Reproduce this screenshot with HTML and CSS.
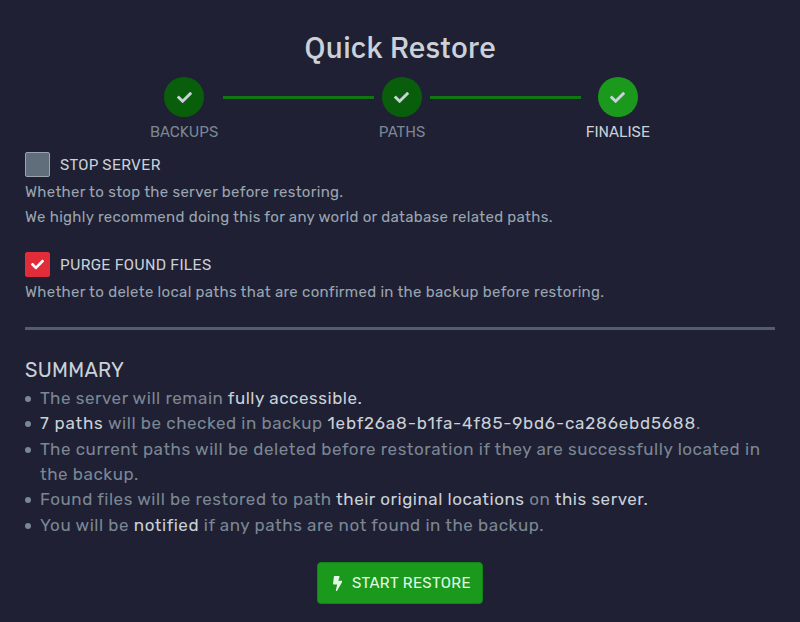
FILE: index.html
```html
<!DOCTYPE html>
<html lang="en">
<head>
<meta charset="utf-8">
<title>Quick Restore</title>
<link rel="stylesheet" href="styles.css">
</head>
<body>
<main class="wizard">
  <h1>Quick Restore</h1>
  <ol class="steps">
    <li class="step"><span class="dot"><svg viewBox="0 0 512 512"><path d="M173.9 439.4 7.5 273c-10-10-10-26.200 0-36.200l36.200-36.200c10-10 26.200-10 36.200 0L192 312.700 432.100 72.600c10-10 26.200-10 36.200 0l36.200 36.200c10 10 10 26.200 0 36.200L210.100 439.400c-10 10-26.200 10-36.200 0z"/></svg></span><span class="label">BACKUPS</span></li>
    <li class="line"></li>
    <li class="step"><span class="dot"><svg viewBox="0 0 512 512"><path d="M173.9 439.4 7.5 273c-10-10-10-26.200 0-36.200l36.200-36.200c10-10 26.200-10 36.200 0L192 312.700 432.100 72.600c10-10 26.200-10 36.200 0l36.200 36.200c10 10 10 26.200 0 36.200L210.100 439.400c-10 10-26.200 10-36.200 0z"/></svg></span><span class="label">PATHS</span></li>
    <li class="line"></li>
    <li class="step active"><span class="dot"><svg viewBox="0 0 512 512"><path d="M173.9 439.4 7.5 273c-10-10-10-26.200 0-36.200l36.200-36.200c10-10 26.200-10 36.200 0L192 312.700 432.100 72.600c10-10 26.200-10 36.200 0l36.200 36.200c10 10 10 26.200 0 36.200L210.100 439.400c-10 10-26.200 10-36.200 0z"/></svg></span><span class="label">FINALISE</span></li>
  </ol>
  <section class="option">
    <div class="option-head"><span class="box"></span><span class="name">STOP SERVER</span></div>
    <p>Whether to stop the server before restoring.</p>
    <p>We highly recommend doing this for any world or database related paths.</p>
  </section>
  <section class="option">
    <div class="option-head"><span class="box checked"><svg viewBox="0 0 512 512"><path d="M173.9 439.4 7.5 273c-10-10-10-26.200 0-36.200l36.200-36.200c10-10 26.200-10 36.200 0L192 312.700 432.100 72.600c10-10 26.200-10 36.200 0l36.200 36.200c10 10 10 26.200 0 36.200L210.100 439.400c-10 10-26.200 10-36.200 0z"/></svg></span><span class="name">PURGE FOUND FILES</span></div>
    <p>Whether to delete local paths that are confirmed in the backup before restoring.</p>
  </section>
  <hr>
  <h2>SUMMARY</h2>
  <ul class="summary">
    <li>The server will remain <b>fully accessible.</b></li>
    <li><b class="wide">7 paths</b> will be checked in backup <b class="wide">1ebf26a8-b1fa-4f85-9bd6-ca286ebd5688</b>.</li>
    <li>The current paths will be deleted before restoration if they are successfully located in the backup.</li>
    <li>Found files will be restored to path <b>their original locations</b> on <b>this server.</b></li>
    <li>You will be <b>notified</b> if any paths are not found in the backup.</li>
  </ul>
  <button class="start"><svg viewBox="0 0 320 512"><path d="M296 160H180.600l42.600-129.800C227.200 15 215.700 0 200 0H56C44 0 33.800 8.900 32.200 20.800l-32 240C-1.700 275.200 9.500 288 24 288h118.700L96.600 482.500c-3.600 15.200 8 29.500 23.300 29.500 8.400 0 16.400-4.400 20.800-12l176-304c9.300-15.900-2.200-36-20.700-36z"/></svg><span>START RESTORE</span></button>
</main>
</body>
</html>
```
FILE: styles.css
```css
* { box-sizing: border-box; margin: 0; padding: 0; }
body { background: #1f2033; color: #cad1d8; font-family: Rubik, Inter, sans-serif; }
.wizard { height: 622px; padding: 27px 25px 0; display: flex; flex-direction: column; }
h1 { font: 500 30px/40px "IBM Plex Sans", "Open Sans", sans-serif; text-align: center; }
.steps { list-style: none; display: flex; align-self: center; gap: 5px; width: 500px; margin-top: 10px; height: 75px; }
.step { display: flex; flex-direction: column; align-items: center; }
.dot { width: 40px; height: 40px; border-radius: 50%; background: #085e0b; display: grid; place-items: center; }
.dot svg { width: 15px; fill: #cad1d8; }
.label { font-size: 15px; line-height: 20px; margin-top: 5px; color: #7b8793; }
.active .dot { background: #1a991d; }
.active .label { color: #cad1d8; }
.line { flex: 1; height: 3px; margin-top: 19px; background: #0f7613; }
.option { height: 100px; }
.option-head { display: flex; align-items: center; gap: 10px; height: 25px; margin-bottom: 3px; font-size: 15px; letter-spacing: 0.3px; }
.box { width: 25px; height: 25px; background: #606d7b; border: 1px solid #9aa5b1; border-radius: 2px; display: grid; place-items: center; }
.box.checked { background: #e12d39; border-color: #e12d39; }
.box svg { width: 13px; fill: #fff; }
.option p { font-size: 15px; line-height: 25px; letter-spacing: 0.31px; color: #9aa5b1; }
hr { border: 0; height: 3px; background: #515f6c; margin-top: -25px; }
h2 { font-size: 20px; font-weight: 400; line-height: 28px; letter-spacing: 0.3px; margin-top: 26px; }
.summary { padding-left: 15px; margin-top: 2.1px; list-style: none; font-size: 17px; line-height: 25.3px; letter-spacing: 0.54px; color: #7b8793; }
.summary li::before { content: ""; float: left; width: 6px; height: 6px; margin: 10px 0 0 -15px; border-radius: 50%; background: #7b8793; }
.summary b { font-weight: 400; color: #cad1d8; }
.summary .wide { letter-spacing: 0.8px; }
.start { align-self: center; width: 166px; height: 42px; margin-top: 24.6px; padding-left: 14.5px; color: #e3f9e5; background: #1a991d; border: 1px solid #0f8613; border-radius: 4px; font: 15px Rubik, Inter, sans-serif; letter-spacing: 0.38px; display: flex; align-items: center; gap: 10px; }
.start svg { height: 15px; fill: currentColor; }
```
